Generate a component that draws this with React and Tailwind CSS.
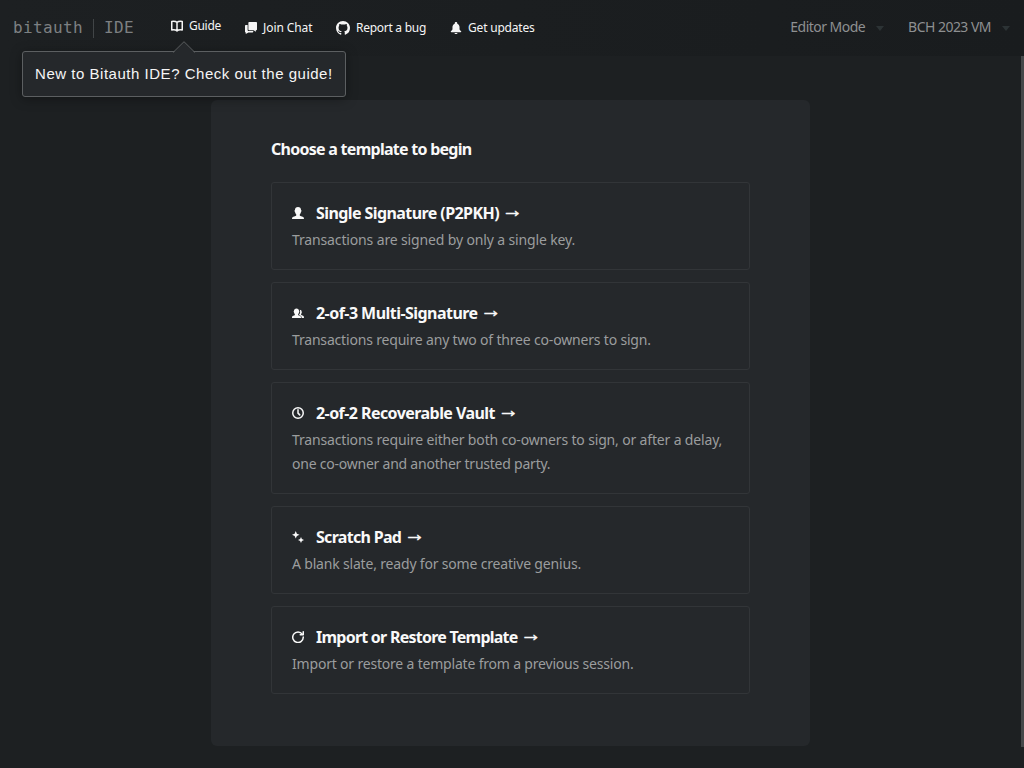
import React from "react";

function Icon({ children, className = "size-3" }) {
  return (
    <svg viewBox="0 0 16 16" fill="currentColor" className={`${className} shrink-0`} aria-hidden="true">
      {children}
    </svg>
  );
}

const GithubIcon = () => (
  <Icon className="size-3.5">
    <path d="M8 0C3.58 0 0 3.58 0 8c0 3.54 2.29 6.53 5.47 7.59.4.07.55-.17.55-.38 0-.19-.01-.82-.01-1.49-2.01.37-2.53-.49-2.69-.94-.09-.23-.48-.94-.82-1.13-.28-.15-.68-.52-.01-.53.63-.01 1.08.58 1.23.82.72 1.21 1.87.87 2.33.66.07-.52.28-.87.51-1.07-1.78-.2-3.64-.89-3.64-3.95 0-.87.31-1.59.82-2.15-.08-.2-.36-1.02.08-2.12 0 0 .67-.21 2.2.82.64-.18 1.32-.27 2-.27s1.36.09 2 .27c1.53-1.04 2.2-.82 2.2-.82.44 1.1.16 1.92.08 2.12.51.56.82 1.27.82 2.15 0 3.07-1.87 3.75-3.65 3.95.29.25.54.73.54 1.48 0 1.07-.01 1.93-.01 2.2 0 .21.15.46.55.38A8.01 8.01 0 0 0 16 8c0-4.42-3.58-8-8-8z" />
  </Icon>
);
const PersonIcon = () => (
  <Icon>
    <path d="M16 16c0-1.700-.6-2.600-1.900-3.100-1.300-.5-2.700-.9-3.500-1.400-.4-.4-.4-1.300-.1-1.900.8-.9 1.300-1.900 1.500-3.100.4-.2.600-.8.600-1.400 0-.5-.2-.8-.5-1C12 1.500 10.600 0 8 0S4 1.500 3.900 4.100c-.3.2-.5.500-.5 1 0 .6.200 1.200.6 1.400.2 1.200.7 2.200 1.500 3.100.3.600.3 1.500-.1 1.900-.8.500-2.200.9-3.500 1.400C.6 13.400 0 14.300 0 16z" />
  </Icon>
);
const PeopleIcon = () => (
  <Icon>
    <path d="M0 14.500c0-1.400.4-2.200 1.600-2.700 1-.4 1.900-.7 2.200-1.200.2-.5.100-.9-.2-1.300-.5-.6-.8-1.300-.9-2.100-.3-.2-.5-.6-.5-1.100 0-.4.200-.7.400-.8C2.700 3.200 3.900 2 6 2s3.300 1.200 3.400 3.300c.2.100.4.400.4.800 0 .5-.2.900-.5 1.100-.1.800-.4 1.500-.9 2.100-.3.400-.4.800-.2 1.300.3.500 1.200.8 2.200 1.200 1.200.5 1.600 1.300 1.600 2.700z" />
    <path d="M10.300 3.500c1.700 0 2.600 1 2.600 2.700.3.100.4.900 0 1.300-.1.700-.4 1.200-.8 1.700-.2.500-.1 1 .3 1.300 1 .6 2.200.8 2.900 1.500.5.500.7 1.300.7 2.500h-3.100c0-1.900-.7-2.900-2.700-3.600-.8-.3-1-.6-.5-1.200.9-1 1.100-2 1.100-3.400 0-1.100-.1-1.900-.5-2.800z" />
  </Icon>
);
const TimeIcon = () => (
  <Icon>
    <circle cx="8" cy="8" r="7" fill="none" stroke="currentColor" strokeWidth="2" />
    <path d="M8 3.800v4.300l2.300 2.400" fill="none" stroke="currentColor" strokeWidth="2" strokeLinecap="round" />
  </Icon>
);
const CleanIcon = () => (
  <Icon>
    <path d="M5 0 3.500 3.500 0 5l3.500 1.500L5 10l1.500-3.500L10 5 6.500 3.500zM12 8l-1.200 2.800L8 12l2.800 1.200L12 16l1.200-2.800L16 12l-2.800-1.200z" />
  </Icon>
);
const RefreshIcon = () => (
  <Icon>
    <path d="M13.700 4.200A7 7 0 1 0 15 8" fill="none" stroke="currentColor" strokeWidth="2" strokeLinecap="round" />
    <path d="M15 1v4h-4" fill="none" stroke="currentColor" strokeWidth="2" strokeLinecap="round" strokeLinejoin="round" />
  </Icon>
);
const ManualIcon = () => (
  <Icon>
    <path d="M8 3.200C6.500 1.900 3.800 1.600 1 2v11.300c2.800-.4 5.500-.1 7 1.200 1.500-1.300 4.200-1.600 7-1.200V2c-2.800-.4-5.500-.1-7 1.200zM8 3.200v11" fill="none" stroke="currentColor" strokeWidth="2" strokeLinejoin="round" />
  </Icon>
);
const ChatIcon = () => (
  <Icon>
    <path d="M5.500 0H15c.6 0 1 .4 1 1v9c0 .6-.4 1-1 1h-.5v2L11.500 11h-6c-.6 0-1-.4-1-1V1c0-.6.400-1 1-1z" />
    <path d="M3.500 4H1c-.6 0-1 .4-1 1v8c0 .6.4 1 1 1v2l3.500-2H10c.6 0 1-.4 1-1v-.9H5c-.8 0-1.500-.700-1.500-1.500z" />
  </Icon>
);
const BellIcon = () => (
  <Icon>
    <path d="M8 16c1.100 0 2-.7 2-1.500H6c0 .8.900 1.500 2 1.500zM14 11.500c-.7-.4-1.300-1.300-1.300-2.500V6.500c0-2-1.300-3.700-3-4.300V1.500C9.700.7 8.900 0 8 0S6.300.7 6.300 1.500v.7c-1.700.6-3 2.300-3 4.300V9c0 1.200-.6 2.100-1.300 2.500-.6.300-1 .6-1 1.100 0 .6.400.9 1 .9h12c.6 0 1-.3 1-.9 0-.5-.4-.8-1-1.100z" />
  </Icon>
);

const templates = [
  {
    icon: PersonIcon,
    title: "Single Signature (P2PKH)",
    titleClass: "tracking-[-0.58px]",
    text: [["Transactions are signed by only a single key.", "tracking-[-0.14px]"]],
  },
  {
    icon: PeopleIcon,
    title: "2-of-3 Multi-Signature",
    titleClass: "tracking-[-0.54px]",
    text: [["Transactions require any two of three co-owners to sign.", "tracking-[-0.18px]"]],
  },
  {
    icon: TimeIcon,
    title: "2-of-2 Recoverable Vault",
    titleClass: "tracking-[-0.56px]",
    text: [
      ["Transactions require either both co-owners to sign, or after a delay,", "tracking-[-0.16px]"],
      ["one co-owner and another trusted party.", "tracking-[-0.23px]"],
    ],
  },
  {
    icon: CleanIcon,
    title: "Scratch Pad",
    titleClass: "tracking-[-0.7px]",
    text: [["A blank slate, ready for some creative genius.", "tracking-[-0.18px]"]],
  },
  {
    icon: RefreshIcon,
    title: "Import or Restore Template",
    titleClass: "tracking-[-0.76px]",
    text: [["Import or restore a template from a previous session.", "tracking-[-0.19px]"]],
  },
];

function TemplateCard({ icon: Glyph, title, titleClass, text }) {
  return (
    <button className="block w-full rounded-[3px] border border-[#323538] px-5 pt-[18px] pb-[17px] text-left">
      <div className="flex h-6 items-center text-base font-bold text-[#f9f9f9]">
        <Glyph />
        <h3 className={`ml-3 whitespace-nowrap ${titleClass}`}>{title}</h3>
        <span className="-mt-2 ml-[3px] font-['Liberation_Sans',sans-serif] text-[21px] leading-none [-webkit-text-stroke:0.5px]">→</span>
      </div>
      <p className="mt-[3px] text-sm leading-6 whitespace-nowrap text-[#9b9d9e]">
        {text.map(([line, lineClass]) => (
          <span key={line} className={`block ${lineClass}`}>{line}</span>
        ))}
      </p>
    </button>
  );
}

function Select({ label }) {
  return (
    <button className="mb-0.5 flex items-center gap-[11px] text-sm tracking-[-0.53px] text-[#8e9091]">
      <span className="whitespace-nowrap">{label}</span>
      <svg viewBox="0 0 8 5" className="mt-0.5 h-[5px] w-2" fill="#2c3335">
        <path d="M0 0h8L4 5z" />
      </svg>
    </button>
  );
}

export default function App() {
  return (
    <div className="flex h-screen flex-col overflow-hidden bg-[#1d2022] font-['Noto_Sans',sans-serif]">
      <header className="flex h-14 shrink-0 items-center justify-between bg-linear-to-r from-[#1d2022] to-[#191c1e] pr-3.5 pl-[13px]">
        <div className="flex items-center">
          <div className="flex items-center font-['DejaVu_Sans_Mono',monospace] text-base tracking-[0.37px] text-[#7d8082]">
            <span>bitauth</span>
            <span className="ml-2.5 h-[19px] w-px bg-[#414547]" />
            <span className="ml-2.5">IDE</span>
          </div>
          <nav className="ml-[37px] flex items-center text-xs tracking-[-0.2px] text-[#f5f5f5]">
            <div className="relative mb-1 flex w-[74px] items-center gap-1.5">
              <ManualIcon />
              <span className="tracking-[-0.3px]">Guide</span>
              <div className="absolute top-[33px] left-[-149px] z-10 h-[46px] w-[324px] rounded-[3px] border border-[#5c5f61] bg-[#25282b] shadow-[0_2px_12px_rgba(0,0,0,0.35)]">
                <svg viewBox="0 0 22 12" className="absolute top-[-11px] left-[150px] h-3 w-[22px]">
                  <path d="M0 12 11 1l11 11z" fill="#25282b" />
                  <path d="M0 11.500 11 .7l11 10.800" fill="none" stroke="#5c5f61" />
                </svg>
                <p className="px-3 font-['Liberation_Sans',sans-serif] text-[15px] leading-[44px] tracking-[0.52px] whitespace-nowrap text-[#f5f5f5]">
                  New to Bitauth IDE? Check out the guide!
                </p>
              </div>
            </div>
            <div className="flex w-[91px] items-center gap-1.5"><ChatIcon /><span className="tracking-[-0.1px] whitespace-nowrap">Join Chat</span></div>
            <div className="flex w-[114px] items-center gap-1.5"><GithubIcon /><span className="tracking-[-0.28px] whitespace-nowrap">Report a bug</span></div>
            <div className="flex items-center gap-1.5"><BellIcon /><span className="whitespace-nowrap">Get updates</span></div>
          </nav>
        </div>
        <div className="flex items-center gap-6">
          <Select label="Editor Mode" />
          <Select label="BCH 2023 VM" />
        </div>
      </header>
      <div className="flex min-h-0 flex-1">
        <div className="flex flex-1 justify-center">
          <main className="mt-11 h-[646px] w-[599px] rounded-md bg-[#25282b] px-[60px] pt-[37px]">
            <h2 className="text-base leading-6 font-bold tracking-[-0.73px] text-[#f9f9f9]">Choose a template to begin</h2>
            <div className="mt-[21px] flex flex-col gap-3">
              {templates.map((t) => (
                <TemplateCard key={t.title} {...t} />
              ))}
            </div>
          </main>
        </div>
        <div className="h-[691px] w-[3px] bg-[#45484a]" />
      </div>
    </div>
  );
}
